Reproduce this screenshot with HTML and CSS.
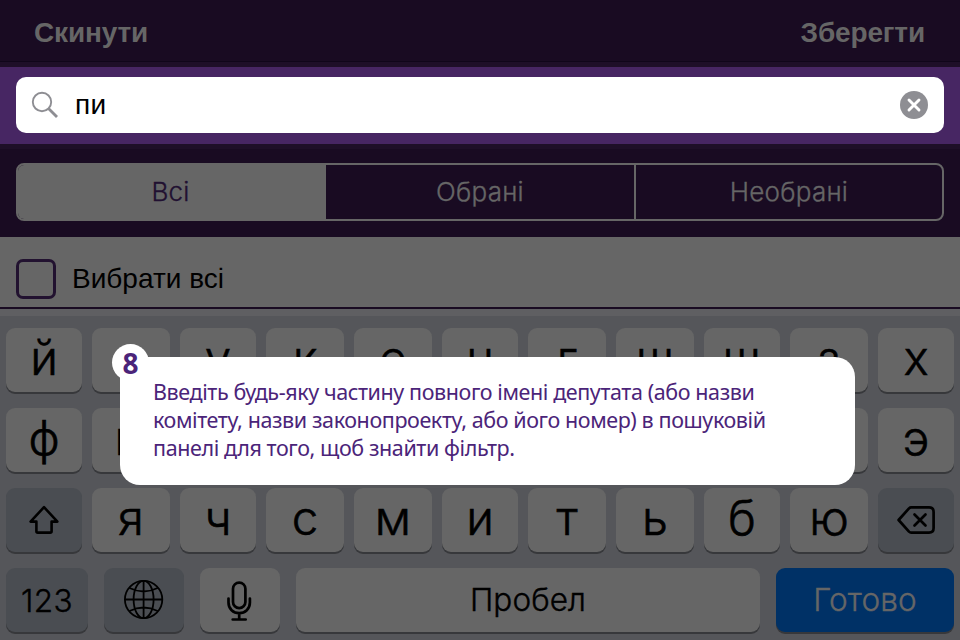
FILE: index.html
```
<!DOCTYPE html>
<html lang="uk">
<head>
<meta charset="utf-8">
<title>Фільтр</title>
<link rel="stylesheet" href="styles.css">
</head>
<body>
<header class="nav"><span class="reset">Скинути</span><span class="save">Зберегти</span></header>
<div class="search-band">
  <div class="search">
    <svg class="lens" width="28" height="28" viewBox="0 0 28 28" fill="none" stroke="#8e8e93"><circle cx="10" cy="11" r="9.200" stroke-width="1.900"/><path d="M16.500 17.500L25 26" stroke-width="2.800"/></svg>
    <span class="query">пи</span>
    <svg class="clear" width="28" height="28" viewBox="0 0 28 28"><circle cx="14" cy="14" r="14" fill="#8e8e93"/><path d="M9 9L19 19M19 9L9 19" stroke="#fff" stroke-width="2.900" stroke-linecap="round"/></svg>
  </div>
</div>
<div class="scope">
  <div class="segments"><span class="seg on">Всі</span><span class="seg">Обрані</span><span class="seg last">Необрані</span></div>
</div>
<div class="row-all"><span class="box"></span><span class="all-label">Вибрати всі</span></div>
<div class="strip"></div>
<main class="keyboard">
  <div class="keys">
    <span class="key">й</span><span class="key">ц</span><span class="key">у</span><span class="key">к</span><span class="key">е</span><span class="key">н</span><span class="key">г</span><span class="key">ш</span><span class="key">щ</span><span class="key">з</span><span class="key">х</span>
    <span class="key">ф</span><span class="key">ы</span><span class="key">в</span><span class="key">а</span><span class="key">п</span><span class="key">р</span><span class="key">о</span><span class="key">л</span><span class="key">д</span><span class="key">ж</span><span class="key">э</span>
    <span class="key dark"><svg width="32" height="30" viewBox="0 0 32 30" fill="none" stroke="#000" stroke-width="2.600" stroke-linejoin="round"><path d="M16 2.200L2.600 16.600H8.400V26.200Q8.400 27.600 9.800 27.600H22.200Q23.600 27.600 23.600 26.200V16.600H29.400Z"/></svg></span>
    <span class="key">я</span><span class="key">ч</span><span class="key">с</span><span class="key">м</span><span class="key">и</span><span class="key">т</span><span class="key">ь</span><span class="key">б</span><span class="key">ю</span>
    <span class="key dark"><svg width="38" height="28" viewBox="0 0 38 28" fill="none" stroke="#000" stroke-width="2.700" stroke-linejoin="round" stroke-linecap="round"><path d="M14.200 1.400H32Q36.600 1.400 36.600 6V22Q36.600 26.600 32 26.600H14.200Q13 26.600 12 25.600L1.600 14L12 2.400Q13 1.400 14.200 1.400Z"/><path d="M17.500 8.500L28.500 19.500M28.500 8.500L17.500 19.500"/></svg></span>
  </div>
  <div class="bottom">
    <span class="key dark word num">123</span>
    <span class="key dark"><svg width="40" height="40" viewBox="0 0 40 40" fill="none" stroke="#000" stroke-width="1.800"><circle cx="19.600" cy="19.500" r="18.700"/><ellipse cx="19.600" cy="19.500" rx="10" ry="18.700"/><path d="M19.600 1V38M1 19.500H38.500M5.500 8Q19.600 15 33.700 8M5.500 31Q19.600 24 33.700 31"/></svg></span>
    <span class="key icon"><svg width="26" height="40" viewBox="0 0 26 40" fill="none" stroke="#000" stroke-width="2.700" stroke-linecap="round"><rect x="6" y="2.600" width="12.400" height="25.500" rx="6.200"/><path d="M1.500 18.500V22.500C1.500 29 6.200 33.200 12.200 33.200S22.900 29 22.900 22.500V18.500M12.200 33.200V39.300M5.700 39.500H18.700"/></svg></span>
    <span class="key word">Пробел</span>
    <span class="key word done">Готово</span>
  </div>
</main>
<aside class="tip">
  <span class="badge">8</span>
  <p>Введіть будь-яку частину повного імені депутата (або назви<br>комітету, назви законопроекту, або його номер) в пошуковій<br>панелі для того, щоб знайти фільтр.</p>
</aside>
</body>
</html>
```
FILE: styles.css
```
* { box-sizing: border-box; }
body {
  margin: 0; width: 960px; height: 640px; overflow: hidden; position: relative;
  display: flex; flex-direction: column; background: #55565a;
  font-family: Inter, "Liberation Sans", sans-serif; color: #000;
}
svg { display: block; overflow: visible; }
.nav {
  height: 67px; flex: none; background: #190b22; border-bottom: 5px solid #1e0f28; box-shadow: inset 0 -1px #10061a;
  display: flex; justify-content: space-between; padding: 16px 35px 0 34px;
  font: bold 28px/34px "Liberation Sans", sans-serif; color: #666; letter-spacing: -0.15px;
}
.search-band { height: 77px; flex: none; background: #472663; padding: 10px 16px 11px; }
.search { height: 56px; background: #fff; border-radius: 10px; display: flex; align-items: center; padding: 0 16px; }
.query { flex: 1; margin-left: 15px; font: 28px/32px "Liberation Sans", sans-serif; letter-spacing: 0.3px; }
.scope { height: 93px; flex: none; background: #190b22; border-top: 5px solid #1e0f28; padding: 14px 16px 0; }
.segments { height: 58px; display: grid; grid-template-columns: 308px 308px 1fr; background: #190b22; border: 2px solid #666; border-radius: 8px; overflow: hidden; }
.seg { display: flex; align-items: center; justify-content: center; font-size: 26px; font-weight: 300; -webkit-text-stroke: 0.35px; letter-spacing: 0.25px; color: #666; padding-bottom: 1px; }
.seg.on { background: #666; color: #211031; padding-right: 3px; }
.seg.last { border-left: 2px solid #666; }
.row-all { height: 72px; flex: none; background: #666; border-bottom: 2px solid #190b22; display: flex; align-items: center; padding: 14px 16px 0; gap: 16px; }
.box { width: 40px; height: 40px; border: 3px solid #221230; border-radius: 7px; }
.all-label { font: 28px/32px "Liberation Sans", sans-serif; }
.strip { height: 7px; flex: none; background: #5f5f62; }
.keyboard { flex: 1; background: #55565a; padding: 12px 6px 0; }
.keys { display: grid; grid-template-columns: 76px 78px 76px 78px 78px 76px 78px 78px 76px 78px 76px; grid-auto-rows: 64px; gap: 16px 10px; }
.bottom { display: grid; grid-template-columns: 82px 80px 80px 464px 178px; gap: 16px; height: 64px; margin-top: 16px; }
.key {
  background: #666; border-radius: 9px; box-shadow: 0 2px #37383b;
  display: flex; align-items: center; justify-content: center;
  font-size: 47.5px; font-weight: 300; line-height: 56px; -webkit-text-stroke: 0.6px; padding-bottom: 5px;
}
.key.dark { background: #4a4d52; padding-bottom: 0; }
.key.icon { padding-bottom: 0; }
.key.word { font-size: 31.5px; -webkit-text-stroke: 0.4px; letter-spacing: 0.1px; padding-bottom: 1px; }
.key.num { padding: 2px 0 0; letter-spacing: 0.4px; }
.key.done { background: #003166; color: #666; }
.tip { position: absolute; left: 120px; top: 357px; width: 735px; height: 128px; background: #fff; border-radius: 20px; padding: 21px 33px; }
.tip p { margin: 0; font: 21.5px/28px "Noto Sans", sans-serif; letter-spacing: -0.4px; color: #4b2479; white-space: nowrap; }
.badge { position: absolute; left: -8px; top: -13px; width: 37px; height: 37px; border-radius: 50%; background: #fff; color: #4b2479; font: bold 28px/39px "Noto Sans", sans-serif; text-align: center; }
```
